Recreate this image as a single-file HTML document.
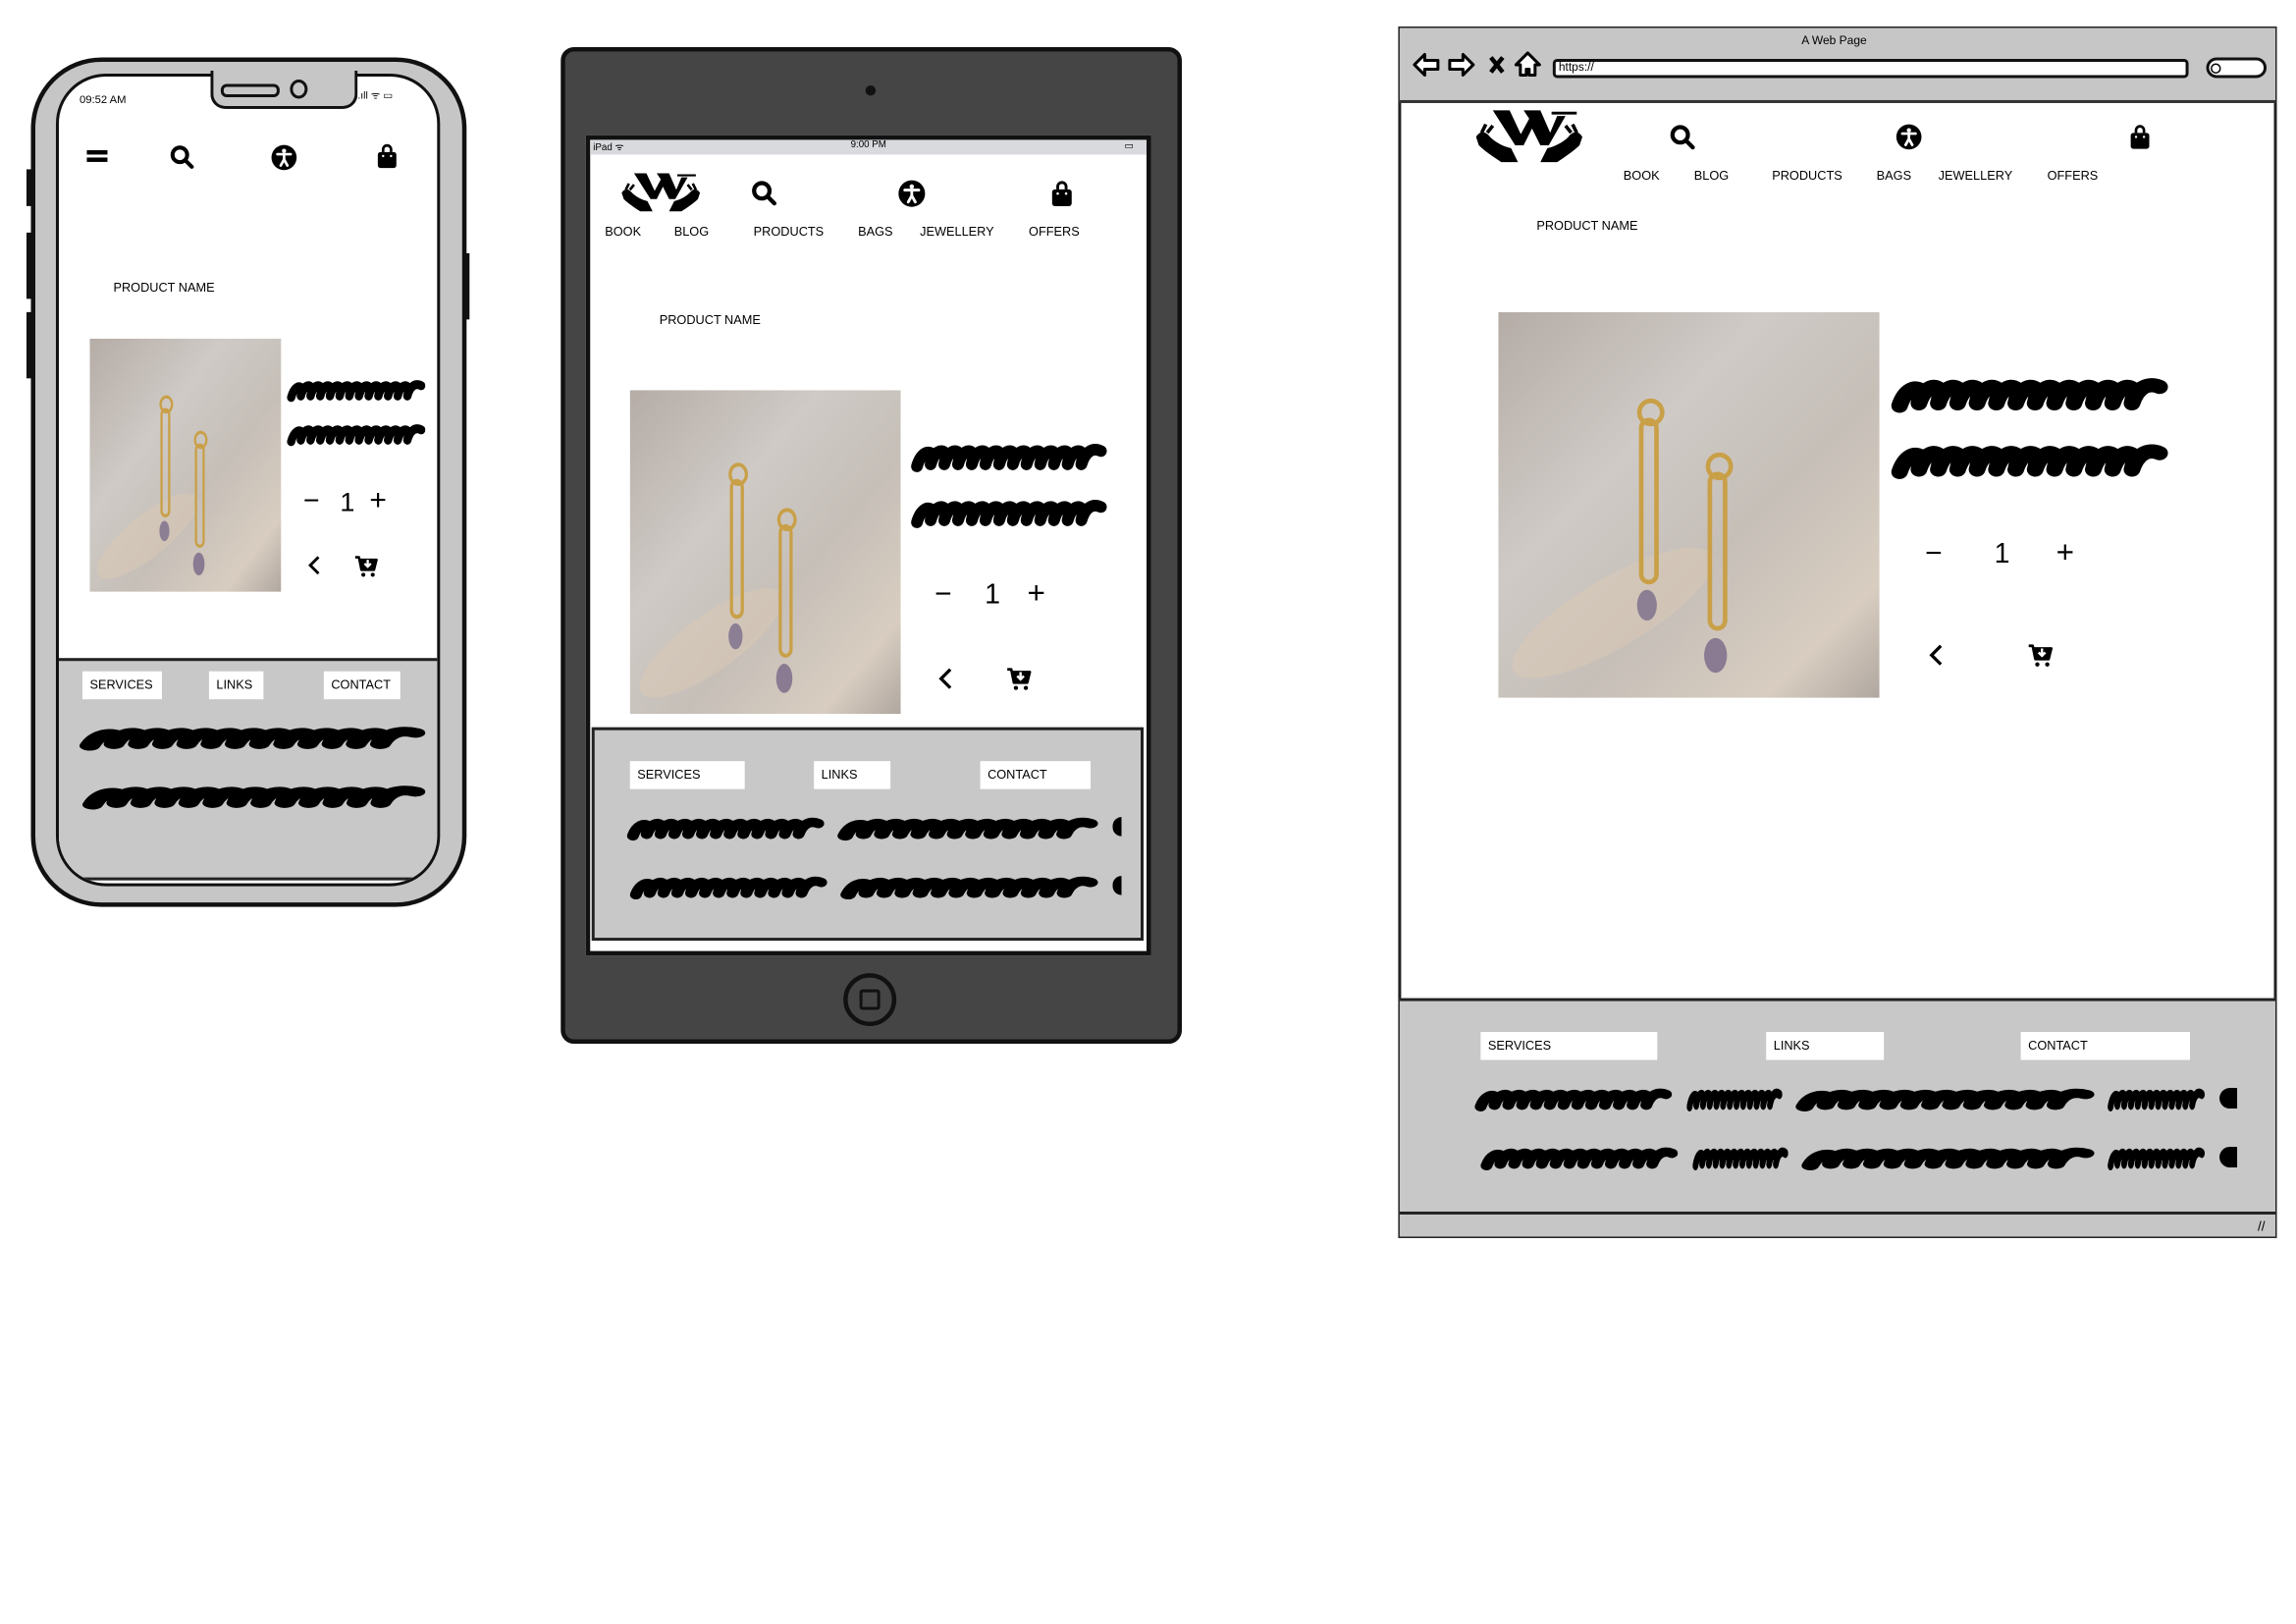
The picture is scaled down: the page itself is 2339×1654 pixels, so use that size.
<!DOCTYPE html>
<html><head><meta charset="utf-8"><style>
html,body{margin:0;padding:0;background:#fff;}
body{width:2339px;height:1654px;overflow:hidden;position:relative;}
#w{position:absolute;left:0;top:0;width:1560px;height:1103px;transform:scale(1.49936);transform-origin:0 0;font-family:"Liberation Sans",sans-serif;color:#000;}
.a{position:absolute;}
.t{position:absolute;font-size:8.5px;white-space:nowrap;}
.btn{position:absolute;background:#fff;font-size:8.5px;line-height:19px;padding-left:5px;box-sizing:border-box;height:19px;}
svg{position:absolute;overflow:visible;}
</style></head><body><div id="w">
<svg width="0" height="0" style="position:absolute">
<defs>
<symbol id="scr" viewBox="0 0 100 20" preserveAspectRatio="none"><path d="M3 16 C5 9 9 7 11 10 L10 15 C12 8 16 6 18 10 L17 15 C19 8 23 6 25 10 L24 15 C26 8 30 6 32 10 L31 15 C33 8 37 6 39 10 L38 15 C40 8 44 6 46 10 L45 15 C47 8 51 6 53 10 L52 15 C54 8 58 6 60 10 L59 15 C61 8 65 6 67 10 L66 15 C68 8 72 6 74 10 L73 15 C75 8 79 6 81 10 L80 15 C82 8 86 6 88 10 L87 15 C89 8 93 6 97 8" fill="none" stroke="#000" stroke-width="6" stroke-linecap="round" stroke-linejoin="round"/></symbol>
<symbol id="srch" viewBox="0 0 20 20"><circle cx="8" cy="8" r="5.5" fill="none" stroke="#000" stroke-width="3"/><path d="M12 12 L17 17" stroke="#000" stroke-width="3" stroke-linecap="round"/></symbol>
<symbol id="acc" viewBox="0 0 20 20"><circle cx="10" cy="10" r="9.5" fill="#000"/><circle cx="10" cy="5" r="1.6" fill="#fff"/><path d="M5 7.5 L15 7.5 M10 7.5 L10 11.5 M10 11.5 L7.5 16 M10 11.5 L12.5 16" stroke="#fff" stroke-width="2" stroke-linecap="round" fill="none"/></symbol>
<symbol id="bag" viewBox="0 0 20 20"><path d="M7 7 V5 A3 3 0 0 1 13 5 V7" fill="none" stroke="#000" stroke-width="2"/><rect x="3" y="7" width="14" height="12" rx="2" fill="#000"/><circle cx="7" cy="10" r="0.9" fill="#fff"/><circle cx="13" cy="10" r="0.9" fill="#fff"/></symbol>
<symbol id="cart" viewBox="0 0 20 20"><path d="M1 3 H4 L6 13 H16 L18 5 H5" fill="#000" stroke="#000" stroke-width="2" stroke-linejoin="round"/><path d="M11 5 V10 M8.5 8 L11 10.5 L13.5 8" stroke="#fff" stroke-width="1.8" fill="none"/><circle cx="7.5" cy="17" r="1.6" fill="#000"/><circle cx="15" cy="17" r="1.6" fill="#000"/></symbol>
<symbol id="lt" viewBox="0 0 20 20"><path d="M13 3 L6 10 L13 17" fill="none" stroke="#000" stroke-width="2.4"/></symbol>
<symbol id="logo" viewBox="0 0 80 40"><path d="M14 1 H26 L34 18 L40 7 L36 1 H48 L55 17 L60 5 H66 L54 26 H48 L42 14 L36 26 H30 Z" fill="#000"/><path d="M56 2 H74 V4 H56 Z" fill="#000"/><path d="M2 20 C5 15 9 16 12 20 C16 24 22 27 27 28 L32 38 H20 C14 34 8 30 4 26 Z" fill="#000"/><path d="M78 20 C75 15 71 16 68 20 C64 24 58 27 53 28 L48 38 H60 C66 34 72 30 76 26 Z" fill="#000"/><path d="M6 17 L9 11 M10 17 L14 12 M74 17 L71 11 M70 17 L66 12" stroke="#000" stroke-width="2.5"/></symbol>
<symbol id="photo" viewBox="0 0 100 100" preserveAspectRatio="none">
<defs><linearGradient id="g" x1="0" y1="0" x2="1" y2="1"><stop offset="0" stop-color="#b5aca6"/><stop offset="0.35" stop-color="#cfcac6"/><stop offset="0.6" stop-color="#c6bfb8"/><stop offset="0.85" stop-color="#d8cdc0"/><stop offset="1" stop-color="#b0a7a0"/></linearGradient></defs>
<rect width="100" height="100" fill="url(#g)"/>
<ellipse cx="30" cy="78" rx="30" ry="9" fill="#dccab5" opacity="0.5" transform="rotate(-30 30 78)"/>
<g fill="none" stroke="#c9a048" stroke-width="1.2" vector-effect="non-scaling-stroke"><circle cx="40" cy="26" r="3"/><rect x="37.5" y="28" width="4" height="42" rx="2"/><circle cx="58" cy="40" r="3"/><rect x="55.5" y="42" width="4" height="40" rx="2"/></g>
<ellipse cx="39" cy="76" rx="2.6" ry="4" fill="#8c7f94"/><ellipse cx="57" cy="89" rx="3" ry="4.5" fill="#8a7a92"/>
</symbol>
</defs></svg>

<!-- PHONE -->
<div class="a" style="left:21px;top:39px;width:290px;height:571px;border:3px solid #111;border-radius:48px;background:#c6c6c6;"></div>
<div class="a" style="left:38px;top:50px;width:261px;height:552px;border:2px solid #111;border-radius:34px;background:#fff;overflow:hidden;box-sizing:border-box;">
 <div class="a" style="left:0;top:395px;width:261px;height:147px;background:#c8c8c8;border-top:2px solid #222;border-bottom:2px solid #222;"></div>
</div>
<div class="a" style="left:18px;top:115px;width:4px;height:25px;background:#111"></div>
<div class="a" style="left:18px;top:158px;width:4px;height:45px;background:#111"></div>
<div class="a" style="left:18px;top:212px;width:4px;height:45px;background:#111"></div>
<div class="a" style="left:315px;top:172px;width:4px;height:45px;background:#111"></div>
<div class="a" style="left:143px;top:48px;width:96px;height:24px;background:#c6c6c6;border:2px solid #111;border-top:none;border-radius:0 0 10px 10px;"></div>
<div class="a" style="left:150px;top:57px;width:36px;height:5px;border:2px solid #111;border-radius:4px;background:#c6c6c6"></div>
<div class="a" style="left:197px;top:54px;width:8px;height:9px;border:2px solid #111;border-radius:50%;"></div>
<div class="t" style="left:54px;top:63px;font-size:7.5px">09:52 AM</div>
<div class="t" style="left:243px;top:61px;font-size:7px">.ıll ᯤ ▭</div>
<div class="a" style="left:59px;top:102px;width:14px;height:2.5px;background:#000"></div>
<div class="a" style="left:59px;top:107px;width:14px;height:2.5px;background:#000"></div>
<svg style="left:115px;top:98px" width="18" height="18"><use href="#srch"/></svg>
<svg style="left:184px;top:98px" width="18" height="18"><use href="#acc"/></svg>
<svg style="left:254px;top:97px" width="18" height="18"><use href="#bag"/></svg>
<div class="t" style="left:77px;top:190px;">PRODUCT NAME</div>
<svg style="left:61px;top:230px" width="130" height="172"><use href="#photo"/></svg>
<svg style="left:195px;top:254px" width="94" height="20"><use href="#scr"/></svg>
<svg style="left:195px;top:284px" width="94" height="20"><use href="#scr"/></svg>
<div class="t" style="left:206px;top:330px;font-size:19px">−</div>
<div class="t" style="left:231px;top:331px;font-size:18px">1</div>
<div class="t" style="left:251px;top:329px;font-size:20px">+</div>
<svg style="left:206px;top:376px" width="16" height="16"><use href="#lt"/></svg>
<svg style="left:240px;top:376px" width="18" height="17"><use href="#cart"/></svg>
<div class="btn" style="left:56px;top:456px;width:54px;">SERVICES</div>
<div class="btn" style="left:142px;top:456px;width:37px;">LINKS</div>
<div class="btn" style="left:220px;top:456px;width:52px;">CONTACT</div>
<svg style="left:54px;top:489px" width="235" height="22"><use href="#scr"/></svg>
<svg style="left:56px;top:529px" width="233" height="22"><use href="#scr"/></svg>

<!-- TABLET -->
<div class="a" style="left:381px;top:32px;width:416px;height:671px;border:3px solid #111;border-radius:9px;background:#454545;"></div>
<div class="a" style="left:588px;top:58px;width:7px;height:7px;border-radius:50%;background:#111"></div>
<div class="a" style="left:398px;top:92px;width:378px;height:551px;border:3px solid #111;background:#fff;"></div>
<div class="a" style="left:401px;top:95px;width:378px;height:10px;background:#d8dadd"></div>
<div class="t" style="left:403px;top:95px;font-size:6.5px">iPad ᯤ</div>
<div class="t" style="left:578px;top:95px;font-size:6.5px">9:00 PM</div>
<div class="t" style="left:764px;top:95px;font-size:6.5px">▭</div>
<svg style="left:421px;top:112px" width="56" height="38"><use href="#logo"/></svg>
<svg style="left:510px;top:122px" width="19" height="19"><use href="#srch"/></svg>
<svg style="left:610px;top:122px" width="19" height="19"><use href="#acc"/></svg>
<svg style="left:712px;top:122px" width="19" height="19"><use href="#bag"/></svg>
<div class="t" style="left:411px;top:152px">BOOK</div>
<div class="t" style="left:458px;top:152px">BLOG</div>
<div class="t" style="left:512px;top:152px">PRODUCTS</div>
<div class="t" style="left:583px;top:152px">BAGS</div>
<div class="t" style="left:625px;top:152px">JEWELLERY</div>
<div class="t" style="left:699px;top:152px">OFFERS</div>
<div class="t" style="left:448px;top:212px">PRODUCT NAME</div>
<svg style="left:428px;top:265px" width="184" height="220"><use href="#photo"/></svg>
<svg style="left:619px;top:296px" width="133" height="26"><use href="#scr"/></svg>
<svg style="left:619px;top:334px" width="133" height="26"><use href="#scr"/></svg>
<div class="t" style="left:635px;top:393px;font-size:20px">−</div>
<div class="t" style="left:669px;top:394px;font-size:19px">1</div>
<div class="t" style="left:698px;top:392px;font-size:21px">+</div>
<svg style="left:634px;top:452px" width="18" height="18"><use href="#lt"/></svg>
<svg style="left:683px;top:452px" width="19" height="18"><use href="#cart"/></svg>
<div class="a" style="left:402px;top:494px;width:375px;height:145px;background:#c8c8c8;border:2px solid #222;box-sizing:border-box;"></div>
<div class="btn" style="left:428px;top:517px;width:78px;">SERVICES</div>
<div class="btn" style="left:553px;top:517px;width:52px;">LINKS</div>
<div class="btn" style="left:666px;top:517px;width:75px;">CONTACT</div>
<svg style="left:426px;top:551px" width="134" height="21"><use href="#scr"/></svg>
<svg style="left:569px;top:551px" width="177" height="21"><use href="#scr"/></svg>
<div class="a" style="left:756px;top:555px;width:6px;height:13px;background:#000;border-radius:6px 0 0 6px"></div>
<svg style="left:428px;top:591px" width="134" height="21"><use href="#scr"/></svg>
<svg style="left:571px;top:591px" width="175" height="21"><use href="#scr"/></svg>
<div class="a" style="left:756px;top:595px;width:6px;height:13px;background:#000;border-radius:6px 0 0 6px"></div>
<div class="a" style="left:573px;top:661px;width:30px;height:30px;border:3px solid #111;border-radius:50%;"></div>
<div class="a" style="left:584px;top:672px;width:10px;height:10px;border:2.5px solid #111;border-radius:2px;"></div>

<!-- BROWSER -->
<div class="a" style="left:950px;top:18px;width:597px;height:823px;border:2px solid #222;background:#fff;box-sizing:border-box;"></div>
<div class="a" style="left:951px;top:19px;width:595px;height:49px;background:#c6c6c6;border-bottom:2px solid #333;"></div>
<div class="t" style="left:1224px;top:23px;font-size:8px">A Web Page</div>
<svg style="left:959px;top:35px" width="90" height="18" viewBox="0 0 90 18"><path d="M2 9 L9 2 V6 H18 V12 H9 V16 Z" fill="#fff" stroke="#000" stroke-width="2" stroke-linejoin="round"/><path d="M42 9 L35 2 V6 H26 V12 H35 V16 Z" fill="#fff" stroke="#000" stroke-width="2" stroke-linejoin="round"/><path d="M54 4 L62 14 M62 4 L54 14" stroke="#000" stroke-width="3"/><path d="M71 9 L79 1 L87 9 H84 V16 H80 V12 H78 V16 H74 V9 Z" fill="#fff" stroke="#000" stroke-width="2" stroke-linejoin="round"/></svg>
<div class="a" style="left:1055px;top:40px;width:432px;height:13px;border:2px solid #111;border-radius:3px;background:#fff;box-sizing:border-box;"></div>
<div class="t" style="left:1059px;top:41px;font-size:8px">https://</div>
<div class="a" style="left:1499px;top:39px;width:41px;height:14px;border:2px solid #111;border-radius:8px;background:#fff;box-sizing:border-box;"></div>
<div class="a" style="left:1502px;top:43px;width:5px;height:5px;border:1.5px solid #000;border-radius:50%"></div>
<svg style="left:998px;top:74px" width="82" height="38"><use href="#logo"/></svg>
<svg style="left:1134px;top:84px" width="19" height="19"><use href="#srch"/></svg>
<svg style="left:1288px;top:84px" width="18" height="18"><use href="#acc"/></svg>
<svg style="left:1445px;top:84px" width="18" height="18"><use href="#bag"/></svg>
<div class="t" style="left:1103px;top:114px">BOOK</div>
<div class="t" style="left:1151px;top:114px">BLOG</div>
<div class="t" style="left:1204px;top:114px">PRODUCTS</div>
<div class="t" style="left:1275px;top:114px">BAGS</div>
<div class="t" style="left:1317px;top:114px">JEWELLERY</div>
<div class="t" style="left:1391px;top:114px">OFFERS</div>
<div class="t" style="left:1044px;top:148px">PRODUCT NAME</div>
<svg style="left:1018px;top:212px" width="259" height="262"><use href="#photo"/></svg>
<svg style="left:1285px;top:250px" width="188" height="32"><use href="#scr"/></svg>
<svg style="left:1285px;top:295px" width="188" height="32"><use href="#scr"/></svg>
<div class="t" style="left:1308px;top:365px;font-size:20px">−</div>
<div class="t" style="left:1355px;top:366px;font-size:19px">1</div>
<div class="t" style="left:1397px;top:364px;font-size:21px">+</div>
<svg style="left:1307px;top:436px" width="18" height="18"><use href="#lt"/></svg>
<svg style="left:1377px;top:436px" width="19" height="18"><use href="#cart"/></svg>
<div class="a" style="left:951px;top:678px;width:595px;height:147px;background:#c8c8c8;border-top:2px solid #222;border-bottom:2px solid #222;box-sizing:border-box;"></div>
<div class="a" style="left:951px;top:825px;width:595px;height:15px;background:#c6c6c6;"></div>
<div class="t" style="left:1534px;top:828px;font-size:9px">//</div>
<div class="btn" style="left:1006px;top:701px;width:120px;">SERVICES</div>
<div class="btn" style="left:1200px;top:701px;width:80px;">LINKS</div>
<div class="btn" style="left:1373px;top:701px;width:115px;">CONTACT</div>
<svg style="left:1002px;top:735px" width="134" height="21"><use href="#scr"/></svg>
<svg style="left:1146px;top:735px" width="65" height="21"><use href="#scr"/></svg>
<svg style="left:1220px;top:735px" width="203" height="21"><use href="#scr"/></svg>
<svg style="left:1432px;top:735px" width="66" height="21"><use href="#scr"/></svg>
<div class="a" style="left:1508px;top:739px;width:12px;height:14px;background:#000;border-radius:7px 0 0 7px"></div>
<svg style="left:1006px;top:775px" width="134" height="21"><use href="#scr"/></svg>
<svg style="left:1150px;top:775px" width="65" height="21"><use href="#scr"/></svg>
<svg style="left:1224px;top:775px" width="199" height="21"><use href="#scr"/></svg>
<svg style="left:1432px;top:775px" width="66" height="21"><use href="#scr"/></svg>
<div class="a" style="left:1508px;top:779px;width:12px;height:14px;background:#000;border-radius:7px 0 0 7px"></div>
</div></body></html>
